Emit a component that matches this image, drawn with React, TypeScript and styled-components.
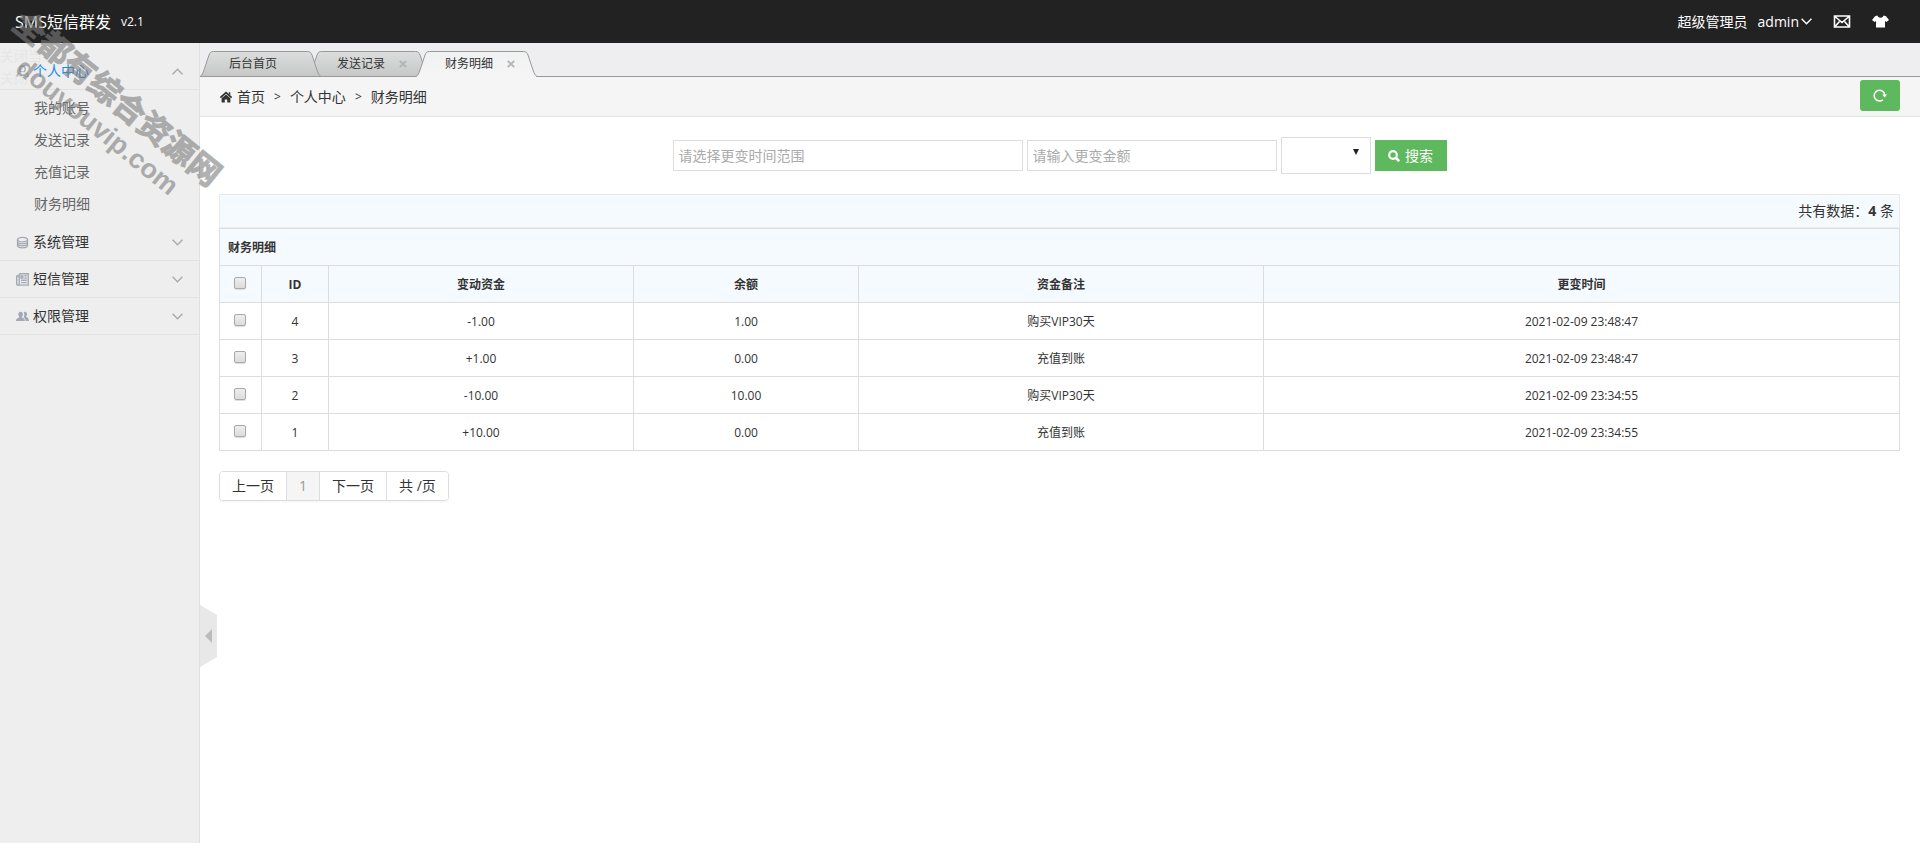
import React from "react";
import styled, { createGlobalStyle } from "styled-components";

const GlobalStyle = createGlobalStyle`
  *, *::before, *::after { box-sizing: border-box; }
  body {
    margin: 0;
    background: #fff;
    color: #333;
    font-family: "Open Sans", "Noto Sans CJK SC", sans-serif;
    font-size: 14px;
    line-height: 20px;
  }
  a { color: inherit; text-decoration: none; }
  button, input, select { font: inherit; color: inherit; margin: 0; }
  ul { list-style: none; margin: 0; padding: 0; }
`;

const Page = styled.div`
  position: relative;
  display: flex;
  flex-direction: column;
  min-height: 100vh;
  overflow: hidden;
`;

const Header = styled.header`
  display: flex;
  align-items: center;
  justify-content: space-between;
  height: 43px;
  padding: 0 31px 0 15px;
  background: #222;
  color: #fff;
`;

const Brand = styled.div`
  display: flex;
  align-items: center;
  gap: 10px;
`;

const Logo = styled.a`
  font-size: 16px;
`;

const Version = styled.span`
  font-size: 12px;
`;

const UserNav = styled.nav`
  display: flex;
  align-items: center;
  gap: 21px;
`;

const UserMenu = styled.a`
  display: flex;
  align-items: center;
  gap: 2px;
`;

const Role = styled.span`
  margin-right: 8px;
`;

const IconLink = styled.a`
  display: flex;
`;

const Body = styled.div`
  display: flex;
  flex: 1;
`;

const Sidebar = styled.aside`
  flex: 0 0 200px;
  padding-top: 10px;
  background: #eee;
  border-right: 1px solid #e0e0e0;
`;

const MenuHead = styled.button<{ $active?: boolean }>`
  display: flex;
  align-items: center;
  gap: 4px;
  width: 100%;
  height: 37px;
  padding: 0 16px;
  border: 0;
  border-bottom: 1px solid #e2e2e2;
  background: none;
  color: ${(p) => (p.$active ? "#148cf1" : "#333")};
  text-align: left;
  cursor: pointer;
`;

const MenuLabel = styled.span`
  flex: 1;
`;

const SubMenu = styled.ul`
  padding: 2px 0 4px;
`;

const SubLink = styled.a`
  display: block;
  padding-left: 34px;
  color: #666;
  line-height: 32px;
`;

const Main = styled.main`
  position: relative;
  flex: 1;
  min-width: 0;
`;

const TabBar = styled.ul`
  display: flex;
  align-items: flex-end;
  height: 34px;
  background: linear-gradient(#999, #999) bottom / 100% 1px no-repeat #eeeef0;
`;

const TabItem = styled.li<{ $level: number }>`
  position: relative;
  z-index: ${(p) => p.$level};
  display: flex;
  align-items: center;
  width: 120px;
  height: 26px;
  margin-right: -12px;
  padding-left: 29px;
  font-size: 12px;
`;

const TabShape = styled.svg`
  position: absolute;
  inset: 0;
  z-index: -1;
`;

const CloseButton = styled.button`
  display: flex;
  margin-left: 14px;
  padding: 0;
  border: 0;
  background: none;
  cursor: pointer;
`;

const Breadcrumb = styled.nav`
  display: flex;
  align-items: center;
  justify-content: space-between;
  height: 40px;
  padding: 0 20px;
  background: #f5f5f5;
  border-bottom: 1px solid #e5e5e5;
`;

const Trail = styled.div`
  display: flex;
  align-items: center;
  gap: 9px;
`;

const HomeLink = styled.a`
  display: flex;
  align-items: center;
  gap: 5px;
`;

const Arrow = styled.span`
  font-size: 12px;
`;

const RefreshButton = styled.button`
  display: flex;
  align-items: center;
  justify-content: center;
  width: 40px;
  height: 31px;
  margin-top: -3px;
  padding: 0;
  border: 0;
  border-radius: 3px;
  background: #5eb95e;
  cursor: pointer;
`;

const Content = styled.div`
  padding: 20px 20px 20px 19px;
`;

const SearchForm = styled.form`
  display: flex;
  align-items: center;
  justify-content: center;
  gap: 4px;
  margin-bottom: 20px;
`;

const TextBox = styled.input<{ $width: number }>`
  width: ${(p) => p.$width}px;
  height: 31px;
  padding: 0 5px;
  border: 1px solid #ddd;
  background: #fff;
  outline: 0;
  &::placeholder { color: #aaa; opacity: 1; }
`;

const SelectWrap = styled.div`
  position: relative;
  display: flex;
`;

const TypeSelect = styled.select`
  width: 90px;
  height: 37px;
  padding: 0 20px 0 4px;
  border: 1px solid #ddd;
  border-radius: 0;
  background: #fff;
  appearance: none;
`;

const SelectArrow = styled.svg`
  position: absolute;
  top: 12px;
  right: 12px;
  pointer-events: none;
`;

const SearchButton = styled.button`
  display: flex;
  align-items: center;
  justify-content: center;
  gap: 5px;
  width: 72px;
  height: 31px;
  padding: 0;
  border: 0;
  background: #5eb95e;
  color: #fff;
  cursor: pointer;
`;

const Summary = styled.div`
  height: 34px;
  padding: 0 5px;
  border: 1px solid #e8eaec;
  border-bottom-color: #eee;
  background: #f5fafe;
  line-height: 32px;
  text-align: right;
`;

const Table = styled.table`
  width: 100%;
  table-layout: fixed;
  border-collapse: collapse;
  font-size: 12px;
  text-align: center;
`;

const Th = styled.th<{ $left?: boolean }>`
  height: 37px;
  padding: 2px 8px 0;
  border: 1px solid #ddd;
  background: #f5fafe;
  text-align: ${(p) => (p.$left ? "left" : "center")};
`;

const Td = styled.td`
  height: 37px;
  padding: 2px 8px 0;
  border: 1px solid #ddd;
`;

const Check = styled.input`
  display: block;
  width: 12px;
  height: 12px;
  margin: 0 6px 4px;
  appearance: none;
  border: 1px solid #a9a9a9;
  border-radius: 2px;
  background: linear-gradient(#eee, #dcdcdc);
  box-shadow: 0 1px 1px #ddd;
  &:checked { background: #5eb95e; }
`;

const Pager = styled.nav`
  display: inline-flex;
  margin-top: 20px;
  border: 1px solid #ddd;
  border-radius: 4px;
  box-shadow: 0 1px 2px rgba(0, 0, 0, 0.05);
  overflow: hidden;
`;

const PageLink = styled.a<{ $current?: boolean }>`
  padding: 0 12px;
  line-height: 28px;
  background: ${(p) => (p.$current ? "#f5f5f5" : "#fff")};
  color: ${(p) => (p.$current ? "#999" : "#333")};
  & + & { border-left: 1px solid #ddd; }
`;

const CollapseButton = styled.button`
  position: absolute;
  left: 0;
  bottom: 176px;
  display: flex;
  align-items: center;
  justify-content: center;
  width: 17px;
  height: 62px;
  padding: 0;
  border: 0;
  background: #e8e8e8;
  clip-path: polygon(0 0, 100% 16%, 100% 84%, 0 100%);
  cursor: pointer;
`;

const TabContextMenu = styled.ul`
  position: absolute;
  top: 45px;
  left: 0;
  color: #e6e6e6;
  line-height: 22px;
  pointer-events: none;
`;

const Watermark = styled.div<{ $x: number; $y: number; $size: number; $stroke: number }>`
  position: absolute;
  left: ${(p) => p.$x}px;
  top: ${(p) => p.$y}px;
  transform: translate(-50%, -50%) rotate(39deg);
  color: #7d7d7d;
  opacity: 0.6;
  font-family: "Liberation Sans", "Noto Sans CJK SC", sans-serif;
  font-size: ${(p) => p.$size}px;
  font-weight: 700;
  line-height: 1;
  -webkit-text-stroke: ${(p) => p.$stroke}px #7d7d7d;
  white-space: nowrap;
  pointer-events: none;
`;

const Chevron = ({ up, color = "#aaa" }: { up?: boolean; color?: string }) => (
  <svg width="11" height="7" viewBox="0 0 11 7" fill="none" stroke={color} strokeWidth="1.4">
    <path d={up ? "M.6 6.2 5.5 1.2 10.4 6.2" : "M.6 .8 5.5 5.8 10.4 .8"} />
  </svg>
);

const UserIcon = () => (
  <svg width="13" height="13" viewBox="0 0 13 13" fill="none" stroke="#a3a9b3" strokeWidth="1.2">
    <ellipse cx="6.5" cy="4" rx="2.7" ry="3.2" />
    <path d="M4.8 7.2C2 8 .8 9 .8 11.4h11.4C12.2 9 11 8 8.2 7.2" />
  </svg>
);

const DatabaseIcon = () => (
  <svg width="13" height="13" viewBox="0 0 13 13" fill="none" stroke="#a3a9b3" strokeWidth="1.3">
    <ellipse cx="6.5" cy="3.6" rx="5" ry="2.3" />
    <path d="M1.5 3.6v6c0 1.3 2.2 2.3 5 2.3s5-1 5-2.3v-6M1.5 5.6c0 1.3 2.2 2.3 5 2.3s5-1 5-2.3M1.5 7.6c0 1.3 2.2 2.3 5 2.3s5-1 5-2.3" />
  </svg>
);

const NewsIcon = () => (
  <svg width="13" height="13" viewBox="0 0 13 13" fill="none" stroke="#a3a9b3" strokeWidth="1.4">
    <path d="M3.2 .7h9v11.4H1.8C1 12.1.7 11.5.7 10.8V3h2.5M3.2 1v9.8c0 .8-.5 1.3-1.2 1.3M5 3h1.8v2H5zM8.4 2.8h2.3M8.4 5h2.3M5 7.3h5.7M5 9.6h5.7" />
  </svg>
);

const GroupIcon = () => (
  <svg width="13" height="13" viewBox="0 0 13 13" fill="#a3a9b3">
    <path d="M4.6 1.8c1.4 0 2.3 1 2.3 2.5 0 1.1-.4 2-1 2.5v.7c1.8.7 3 1.2 3 3.5H0C0 8.700 1.4 8.2 3.4 7.5v-.7c-.7-.5-1.1-1.400-1.1-2.500 0-1.5.9-2.500 2.300-2.500z" />
    <path d="M9 1.800c1.300 0 2.100 1 2.100 2.300 0 1-.4 1.800-.9 2.300v.7c1.600.6 2.800 1.600 2.800 3.900H9.700c-.2-2-1-2.800-2.200-3.400.5-.7.8-1.700.8-2.900 0-.9-.3-1.900-.7-2.400.4-.3.900-.5 1.400-.5z" />
  </svg>
);

const MailIcon = () => (
  <svg width="18" height="13" viewBox="0 0 18 13" fill="none" stroke="#fff" strokeWidth="1.6">
    <path d="M1.500 1h15v11h-15zM2 1.500l7 6 7-6M2 11.500l4.500-5M16 11.500l-4.500-5" />
  </svg>
);

const ShirtIcon = () => (
  <svg width="17" height="13" viewBox="0 0 17 13" fill="#fff">
    <path d="M5.500.5C6 2 7 2.700 8.500 2.700S11 2 11.500.5L14 1.300l3 3.700-2.600 2-1.400-1v6.500H4V6L2.600 7 0 5l3-3.700z" />
  </svg>
);

const HomeIcon = () => (
  <svg width="12" height="12" viewBox="0 0 12 12">
    <path d="M.4 6.600 6 1.700l5.600 4.900" fill="none" stroke="#333" strokeWidth="1.700" />
    <path d="M1.600 7.300 6 3.600l4.400 3.700V11.500H7.200V8.500H4.800v3H1.600z" fill="#333" />
    <path d="M8.800 1.200h1.500v3l-1.500-1.300z" fill="#333" />
  </svg>
);

const RefreshIcon = () => (
  <svg width="14" height="13" viewBox="0 0 14 13">
    <path d="M9.800 10.800A5.300 5.300 0 1 1 11.800 6" fill="none" stroke="#fff" strokeWidth="1.500" />
    <path d="M9.200 5.500h4.800l-2.400 3z" fill="#fff" />
  </svg>
);

const SearchIcon = () => (
  <svg width="12" height="12" viewBox="0 0 12 12" fill="none" stroke="#fff">
    <circle cx="5" cy="5" r="3.800" strokeWidth="2.200" />
    <path d="M8 8l3.200 3.200" strokeWidth="2.600" />
  </svg>
);

const CloseIcon = () => (
  <svg width="8" height="8" viewBox="0 0 8 8" stroke="#aeb4b8" strokeWidth="1.800">
    <path d="M.8.8l6.400 6.400M7.200.8.8 7.200" />
  </svg>
);

interface TabProps {
  label: string;
  level: number;
  active?: boolean;
  closable?: boolean;
}

const Tab = ({ label, level, active, closable }: TabProps) => {
  const fill = `tab-fill-${level}`;
  return (
    <TabItem $level={level}>
      <TabShape width="121" height="26" viewBox="0 0 121 26" aria-hidden="true">
        <defs>
          <linearGradient id={fill} x1="0" y1="0" x2="0" y2="1">
            <stop offset="0" stopColor={active ? "#f0f1f1" : "#dcdedd"} />
            <stop offset="1" stopColor={active ? "#f5f5f5" : "#c6c6c7"} />
          </linearGradient>
        </defs>
        <path
          d="M0 26C2 24.500 3 22 4 19L9 4C10 1.500 11 .5 13.500 .5H107.500C110 .5 111 1.500 112 4L117 19C118 22 119 24.500 121 26Z"
          fill={`url(#${fill})`}
        />
        <path
          d="M0 25.500C2 24.500 3 22 4 19L9 4C10 1.500 11 .5 13.500 .5H107.500C110 .5 111 1.500 112 4L117 19C118 22 119 24.500 121 25.500"
          fill="none"
          stroke="#999"
        />
        {!active && <path d="M0 25.500H121" stroke="#999" />}
      </TabShape>
      <a href="#tab">{label}</a>
      {closable && (
        <CloseButton aria-label={`关闭${label}`}>
          <CloseIcon />
        </CloseButton>
      )}
    </TabItem>
  );
};

const accountLinks = ["我的账号", "发送记录", "充值记录", "财务明细"];

const sections = [
  { label: "系统管理", icon: <DatabaseIcon /> },
  { label: "短信管理", icon: <NewsIcon /> },
  { label: "权限管理", icon: <GroupIcon /> },
];

const records = [
  { id: 4, change: "-1.00", balance: "1.00", note: "购买VIP30天", time: "2021-02-09 23:48:47" },
  { id: 3, change: "+1.00", balance: "0.00", note: "充值到账", time: "2021-02-09 23:48:47" },
  { id: 2, change: "-10.00", balance: "10.00", note: "购买VIP30天", time: "2021-02-09 23:34:55" },
  { id: 1, change: "+10.00", balance: "0.00", note: "充值到账", time: "2021-02-09 23:34:55" },
];

export default function App() {
  return (
    <>
      <GlobalStyle />
      <Page>
        <Header>
          <Brand>
            <Logo href="#home">SMS短信群发</Logo>
            <Version>v2.1</Version>
          </Brand>
          <UserNav>
            <UserMenu href="#user">
              <Role>超级管理员</Role>
              admin
              <Chevron color="#fff" />
            </UserMenu>
            <IconLink href="#messages" aria-label="消息">
              <MailIcon />
            </IconLink>
            <IconLink href="#skin" aria-label="换肤">
              <ShirtIcon />
            </IconLink>
          </UserNav>
        </Header>
        <Body>
          <Sidebar>
            <MenuHead $active>
              <UserIcon />
              <MenuLabel>个人中心</MenuLabel>
              <Chevron up />
            </MenuHead>
            <SubMenu>
              {accountLinks.map((label) => (
                <li key={label}>
                  <SubLink href="#page">{label}</SubLink>
                </li>
              ))}
            </SubMenu>
            {sections.map((section) => (
              <MenuHead key={section.label}>
                {section.icon}
                <MenuLabel>{section.label}</MenuLabel>
                <Chevron />
              </MenuHead>
            ))}
          </Sidebar>
          <Main>
            <TabBar>
              <Tab label="后台首页" level={2} />
              <Tab label="发送记录" level={1} closable />
              <Tab label="财务明细" level={3} active closable />
            </TabBar>
            <Breadcrumb>
              <Trail>
                <HomeLink href="#home">
                  <HomeIcon />
                  首页
                </HomeLink>
                <Arrow>&gt;</Arrow>
                <span>个人中心</span>
                <Arrow>&gt;</Arrow>
                <span>财务明细</span>
              </Trail>
              <RefreshButton aria-label="刷新">
                <RefreshIcon />
              </RefreshButton>
            </Breadcrumb>
            <Content>
              <SearchForm>
                <TextBox $width={350} placeholder="请选择更变时间范围" aria-label="更变时间范围" />
                <TextBox $width={250} placeholder="请输入更变金额" aria-label="更变金额" />
                <SelectWrap>
                  <TypeSelect aria-label="类型" defaultValue="">
                    <option value="" />
                  </TypeSelect>
                  <SelectArrow width="6" height="6" viewBox="0 0 6 6">
                    <path d="M0 0h6L3 6z" fill="#222" />
                  </SelectArrow>
                </SelectWrap>
                <SearchButton type="button">
                  <SearchIcon />
                  搜索
                </SearchButton>
              </SearchForm>
              <Summary>
                共有数据：<strong>4</strong> 条
              </Summary>
              <Table>
                <colgroup>
                  <col style={{ width: 42 }} />
                  <col style={{ width: 67 }} />
                  <col style={{ width: 305 }} />
                  <col style={{ width: 225 }} />
                  <col style={{ width: 405 }} />
                  <col />
                </colgroup>
                <thead>
                  <tr>
                    <Th $left colSpan={6}>财务明细</Th>
                  </tr>
                  <tr>
                    <Th>
                      <Check type="checkbox" aria-label="全选" />
                    </Th>
                    <Th>ID</Th>
                    <Th>变动资金</Th>
                    <Th>余额</Th>
                    <Th>资金备注</Th>
                    <Th>更变时间</Th>
                  </tr>
                </thead>
                <tbody>
                  {records.map((record) => (
                    <tr key={record.id}>
                      <Td>
                        <Check type="checkbox" aria-label={`选择 ${record.id}`} />
                      </Td>
                      <Td>{record.id}</Td>
                      <Td>{record.change}</Td>
                      <Td>{record.balance}</Td>
                      <Td>{record.note}</Td>
                      <Td>{record.time}</Td>
                    </tr>
                  ))}
                </tbody>
              </Table>
              <Pager aria-label="分页">
                <PageLink href="#prev">上一页</PageLink>
                <PageLink href="#1" $current>1</PageLink>
                <PageLink href="#next">下一页</PageLink>
                <PageLink as="span">共 /页</PageLink>
              </Pager>
            </Content>
            <CollapseButton aria-label="收起菜单">
              <svg width="7" height="14" viewBox="0 0 7 14">
                <path d="M7 0v14L0 7z" fill="#bbb" />
              </svg>
            </CollapseButton>
          </Main>
        </Body>
        <TabContextMenu aria-hidden="true">
          <li>关闭当</li>
          <li>关闭</li>
        </TabContextMenu>
        <Watermark $x={117} $y={99} $size={32} $stroke={1}>全都有综合资源网</Watermark>
        <Watermark $x={97} $y={127} $size={27} $stroke={0}>douyouvip.com</Watermark>
      </Page>
    </>
  );
}
